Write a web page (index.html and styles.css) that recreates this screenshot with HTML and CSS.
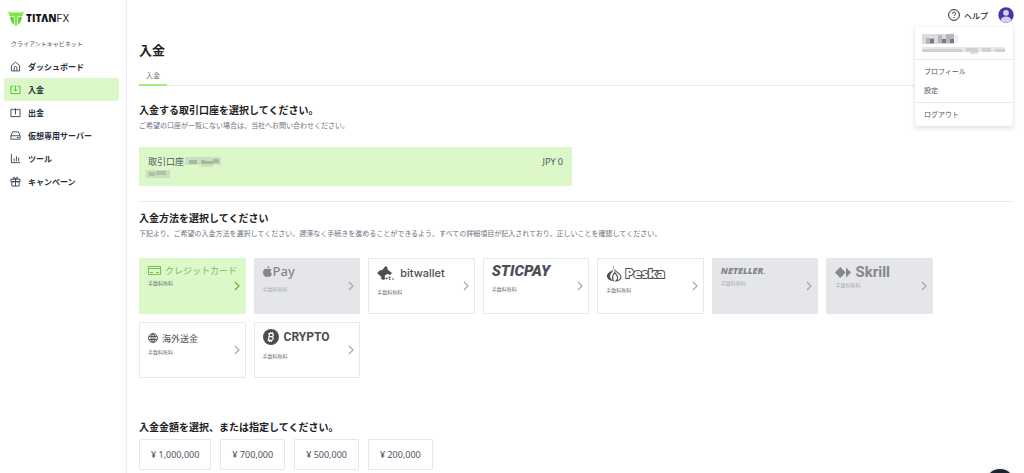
FILE: index.html
```html
<!DOCTYPE html>
<html lang="ja">
<head>
<meta charset="utf-8">
<meta name="viewport" content="width=device-width, initial-scale=1">
<title>入金 | Titan FX</title>
<link rel="stylesheet" href="styles.css">
</head>
<body>
<svg class="defs" aria-hidden="true">
  <symbol id="chevron" viewBox="0 0 6 10"><path d="M1 1l4 4-4 4" fill="none" stroke="currentColor" stroke-width="1.1"/></symbol>
</svg>
<div class="app">
  <aside class="sidebar">
    <a class="logo" href="#" aria-label="TITAN FX">
      <svg width="16" height="15" viewBox="0 0 16 15"><path d="M0 .5l3 1h10l3-1-1.600 4.500H10l-.6 1v8L8 15l-1.400-1V6L6 5H1.600z" fill="#7be84a"/><path d="M2 5.700h3.300l.7 1v6.700C3.600 11.500 2.100 9 2 5.700zM14 5.700h-3.300l-.7 1v6.700c2.400-1.900 3.900-4.400 4-7.700z" fill="#5fd62e"/></svg>
      <span class="logo-text"><b>TITΛN</b>FX</span>
    </a>
    <p class="side-title">クライアントキャビネット</p>
    <nav class="nav">
      <a class="nav-item" href="#"><svg viewBox="0 0 12 12"><path d="M1.500 5L6 1.200 10.500 5v5.800h-9zM4.500 10.500V7.500a1.500 1.500 0 0 1 3 0v3"/></svg>ダッシュボード</a>
      <a class="nav-item active" href="#"><svg viewBox="0 0 12 12"><path d="M4 2.500H1v8h10v-8H8M6 1.500v6M4 5.700l2 2 2-2"/></svg>入金</a>
      <a class="nav-item" href="#"><svg viewBox="0 0 12 12"><path d="M4 2.500H1v8h10v-8H8M6 8V2M4 3.800l2-2 2 2"/></svg>出金</a>
      <a class="nav-item" href="#"><svg viewBox="0 0 12 12"><path d="M1 6.300L2.800 2h6.400L11 6.300V10H1zM1 6.300h10M7.500 8.200h2"/></svg>仮想専用サーバー</a>
      <a class="nav-item" href="#"><svg viewBox="0 0 12 12"><path d="M1.500 1v9.500H11M4.500 6v3M7 3.500V9M9.500 5v4"/></svg>ツール</a>
      <a class="nav-item" href="#"><svg viewBox="0 0 12 12"><path d="M1 3.500h10v2.700H1zM2 6.200h8V11H2zM6 3.500V11M6 3.500C4.500 3.500 3 3 3.500 1.800 4.300.6 6 1.800 6 3.500zM6 3.500c1.500 0 3-.5 2.500-1.700C7.700.6 6 1.800 6 3.500z"/></svg>キャンペーン</a>
    </nav>
  </aside>

  <div class="page">
    <header class="topbar">
      <a class="help" href="#"><svg width="12" height="12" viewBox="0 0 12 12" fill="none" stroke="currentColor" stroke-width="1"><circle cx="6" cy="6" r="5.400"/><path d="M4.400 4.700c0-2 3.200-2 3.200 0C7.600 5.900 6 5.800 6 7.100M6 8v1.100"/></svg>ヘルプ</a>
      <button class="avatar" type="button" aria-label="アカウント">
        <svg width="16" height="16" viewBox="0 0 16 16"><circle cx="8" cy="8" r="7.700" fill="#4338a5"/><circle cx="8" cy="5.800" r="2.900" fill="#d5d1ef"/><path d="M2.600 13.200c1-5 9.800-5 10.800 0a7.700 7.700 0 0 1-10.800 0z" fill="#d5d1ef"/></svg>
      </button>
      <div class="menu">
        <div class="menu-user">
          <svg class="mosaic" width="36" height="10" viewBox="0 0 36 10"><path fill="#d9dbdf" d="M0 0h32v10H0z"/><path fill="#b4b6bd" d="M4 4h8v6H4zM16 1h4v8h-4zM24 0h8v9h-8z"/><path fill="#777a82" d="M8 5h4v4H8zM20 5h4v4h-4zM28 5h4v4h-4z"/><path fill="#eff0f2" d="M32 1h4v8h-4z"/></svg>
          <svg class="mosaic" width="84" height="8" viewBox="0 0 84 8"><path fill="#e7e8eb" d="M0 1h83v5H0z"/><path fill="#cfd1d6" d="M0 3h40v3H0zM44 2h12v4H44zM60 2h9v4h-9zM73 3h10v3H73z"/><path fill="#dcdee2" d="M48 6h8v2h-8z"/></svg>
        </div>
        <div class="menu-group">
          <a href="#">プロフィール</a>
          <a href="#">設定</a>
        </div>
        <div class="menu-group">
          <a href="#">ログアウト</a>
        </div>
      </div>
    </header>

    <main class="content">
      <h1>入金</h1>
      <nav class="tabs"><a class="tab" href="#">入金</a></nav>

      <section class="accounts">
        <h2>入金する取引口座を選択してください。</h2>
        <p class="desc">ご希望の口座が一覧にない場合は、当社へお問い合わせください。</p>
        <button class="account" type="button">
          <span class="account-info">
            <span class="account-name">取引口座
              <svg width="36" height="11" viewBox="0 0 36 11"><path fill="#c9dfbd" d="M0 1h36v8H0zM16 9h12v2H16z"/><path fill="#a7b9a0" d="M4 4h8v4H4zM16 4h4v4h-4zM20 5h8v3h-8zM28 3h6v4h-6z"/></svg>
            </span>
            <svg class="account-id" width="24" height="8" viewBox="0 0 24 8"><path fill="#c9dfbd" d="M0 0h24v8H0z"/><path fill="#afc2a6" d="M3 2h6v4H3zM10 1h10v4H10z"/></svg>
          </span>
          <span>JPY 0</span>
        </button>
      </section>

      <section class="methods">
        <h2>入金方法を選択してください</h2>
        <p class="desc">下記より、ご希望の入金方法を選択してください。遅滞なく手続きを進めることができるよう、すべての詳細項目が記入されており、正しいことを確認してください。</p>
        <div class="cards">
          <button class="card selected" type="button">
            <span class="card-body short"><span class="brand plain"><svg width="13" height="9" viewBox="0 0 13 9"><path d="M.5.5h12v8H.5zM.5 2.500h12M2 6.500h3M8 6.500h3" fill="none" stroke="currentColor"/></svg>クレジットカード</span><small>手数料無料</small></span>
            <svg class="chev"><use href="#chevron"/></svg>
          </button>
          <button class="card" type="button" disabled>
            <span class="card-body tall"><span class="brand apple"><svg width="9" height="11" viewBox="0 0 9 11" fill="currentColor"><path d="M6.300 0c.1 1.300-.8 2.400-2 2.500C4.200 1.200 5.200.2 6.300 0zM8.600 3.800C7 4.800 7.200 7 9 7.700 8.400 9.600 7.300 11 6.200 10.900c-.7-.1-.9-.4-1.600-.4s-1 .4-1.600.4C1.500 11 0 8.500 0 6.300 0 4 1.400 2.800 2.800 2.800c.8 0 1.300.5 1.900.5.500 0 1.100-.6 2.200-.5.700 0 1.300.4 1.700 1z"/></svg>Pay</span><small>手数料無料</small></span>
            <svg class="chev"><use href="#chevron"/></svg>
          </button>
          <button class="card" type="button">
            <span class="card-body taller"><span class="brand bitwallet"><svg width="17" height="15" viewBox="0 0 17 15" fill="currentColor"><path d="M8.500 0l2 1.500v2L15 7l-2 2-2-1-2.300.7-1.200 1.600 1 2.500L6.500 14 4 12.800 4.500 11 0 7l3.500-3 1.500.3z"/><circle cx="9.800" cy="12.300" r=".9"/><circle cx="12.500" cy="11.500" r="1"/><circle cx="12.800" cy="13.500" r=".7"/><circle cx="16" cy="13" r=".8"/></svg>bitwallet</span><small>手数料無料</small></span>
            <svg class="chev"><use href="#chevron"/></svg>
          </button>
          <button class="card" type="button">
            <span class="card-body tall"><span class="brand sticpay">STICPAY</span><small>手数料無料</small></span>
            <svg class="chev"><use href="#chevron"/></svg>
          </button>
          <button class="card" type="button">
            <span class="card-body taller close"><span class="brand peska"><svg width="17" height="17" viewBox="0 0 17 17" fill="none" stroke="currentColor"><path d="M7.500 0c1 3 .8 4-1.500 5.500C2.500 7.500 0 9.500 1.200 12.500 2 15 5 16 7.500 16c-3-2-4-4-3.200-6.200C5.200 7.500 8 6.500 7.500 0z" fill="currentColor" stroke="none"/><path d="M8.500 4.500c.3 2.500 6 3.500 6.500 7 .3 2.500-2 4.500-5 4.500 2.500-2 2.500-4.500-1.500-8.500-2.500 4-3 6.500-.5 8.500" stroke-width="1.100"/></svg><span class="peska-word">Peska</span></span><small>手数料無料</small></span>
            <svg class="chev"><use href="#chevron"/></svg>
          </button>
          <button class="card" type="button" disabled>
            <span class="card-body short"><span class="brand neteller">NETELLER<i>.</i></span><small>手数料無料</small></span>
            <svg class="chev"><use href="#chevron"/></svg>
          </button>
          <button class="card" type="button" disabled>
            <span class="card-body medium"><span class="brand skrill"><svg width="16" height="11" viewBox="0 0 16 11" fill="currentColor"><path d="M5.300 0l5.200 5.500L5.300 11 0 5.500zM11 .5l5 5-5 5z"/></svg>Skrill</span><small>手数料無料</small></span>
            <svg class="chev"><use href="#chevron"/></svg>
          </button>
          <button class="card" type="button">
            <span class="card-body wire"><span class="brand plain"><svg width="10" height="10" viewBox="0 0 10 10" fill="none" stroke="currentColor" stroke-width=".9"><circle cx="5" cy="5" r="4.500"/><ellipse cx="5" cy="5" rx="2" ry="4.500"/><path d="M1 3.500h8M1 6.500h8M5 .5v9"/></svg>海外送金</span><small>手数料無料</small></span>
            <svg class="chev"><use href="#chevron"/></svg>
          </button>
          <button class="card" type="button">
            <span class="card-body taller"><span class="brand crypto"><svg width="16" height="16" viewBox="0 0 16 16"><circle cx="8" cy="8" r="8" fill="currentColor"/><path d="M6.500 4.300l-1 7M5.300 4.500h3.500c2.200 0 2 3.200-.3 3.200H6.300h2.300c2.500 0 2 3.600-.5 3.600H4.600M7.500 3v1.500M9.300 3v1.700M6.500 11.300V13M8.300 11.300V13" fill="none" stroke="#fff" stroke-width="1.200"/></svg>CRYPTO</span><small>手数料無料</small></span>
            <svg class="chev"><use href="#chevron"/></svg>
          </button>
        </div>
      </section>

      <section class="amount">
        <h2>入金金額を選択、または指定してください。</h2>
        <div class="amounts">
          <button type="button">¥ 1,000,000</button>
          <button type="button">¥ 700,000</button>
          <button type="button">¥ 500,000</button>
          <button type="button">¥ 200,000</button>
        </div>
      </section>
    </main>
  </div>
</div>
<button class="chat" type="button" aria-label="チャット"></button>
</body>
</html>
```
FILE: styles.css
```css
* { box-sizing: border-box; }
html, body { height: 100%; }
body {
  margin: 0;
  overflow: hidden;
  background: #fff;
  color: #4b5563;
  font-family: "Noto Sans", "Noto Sans CJK JP", sans-serif;
  font-size: 8px;
}
a { color: inherit; text-decoration: none; }
button { margin: 0; padding: 0; border: 0; background: none; color: inherit; font: inherit; }
h1, h2, p { margin: 0; }
svg { display: block; flex: none; }
.defs { position: absolute; width: 0; height: 0; }

.app { display: flex; min-height: 100%; }

.sidebar { flex: none; width: 127px; padding: 11px 7px 0 4px; border-right: 1px solid #edeef0; }
.logo { display: flex; align-items: center; gap: 2px; height: 15px; padding-left: 4px; color: #16181d; }
.logo-text { font: 400 10px/15px Inter, sans-serif; }
.logo-text b { font-family: "Open Sans", sans-serif; font-weight: 800; }
.side-title { padding: 12px 0 0 7px; font-size: 6px; line-height: 12px; }
.nav { display: grid; padding-top: 5px; }
.nav-item {
  display: flex;
  align-items: center;
  gap: 7px;
  height: 23px;
  padding-left: 6px;
  border-radius: 2px;
  color: #252c3a;
  font-weight: 600;
  font-size: 8px;
}
.nav-item svg { width: 11px; height: 11px; fill: none; stroke: #374151; stroke-width: 1; }
.nav-item.active { background: #dcf8c9; }
.nav-item.active svg { stroke: #4fbf28; }

.page { flex: 1; min-width: 0; }
.topbar {
  position: relative;
  display: flex;
  align-items: center;
  justify-content: flex-end;
  gap: 10px;
  height: 30px;
  padding-right: 10px;
}
.help { display: flex; align-items: center; gap: 4px; color: #1f2937; font-weight: 500; }
.menu {
  position: absolute;
  top: 27px;
  right: 11px;
  width: 98px;
  background: #fff;
  border-radius: 2px;
  box-shadow: 0 0 1px rgba(0, 0, 0, .15), 0 2px 5px rgba(0, 0, 0, .13);
}
.menu-user { display: grid; gap: 2px; padding: 7px 0 5px 7px; }
.menu-group { padding: 2px 0; border-top: 1px solid #e8e9ec; }
.menu-group a { display: block; padding-left: 9px; font-size: 7px; line-height: 19px; }

.content { padding: 11px 11px 0 12px; }
h1 { color: #222; font-size: 13px; line-height: 18px; font-weight: 600; }
.tabs { display: flex; margin-top: 9px; box-shadow: inset 0 -1px #e9eaed; }
.tab { padding: 0 7px; border-bottom: 2px solid #a5ec7b; color: #6b7280; font-size: 7px; line-height: 16px; }
h2 { color: #222; font-size: 10px; line-height: 16px; font-weight: 600; }
.desc { color: #6b7280; font-size: 7px; line-height: 16px; }

.accounts { padding: 16px 0 15px; border-bottom: 1px solid #e9eaed; }
.account {
  display: flex;
  justify-content: space-between;
  width: 100%;
  max-width: 433px;
  margin-top: 13px;
  padding: 8px 9px;
  border-radius: 1px;
  background: #dcf8c9;
  font-size: 9px;
  line-height: 13px;
}
.account-name { display: flex; align-items: center; gap: 1px; }
.account-id { margin: 2px 0 0 -2px; }

.methods { padding-top: 8px; }
.cards { display: grid; grid-template-columns: repeat(7, minmax(0, 1fr)); gap: 8px; max-width: 794px; margin-top: 16px; }
.card {
  display: flex;
  align-items: center;
  justify-content: space-between;
  height: 56px;
  padding: 5px 5px 5px 8px;
  border: 1px solid #e9eaec;
  border-radius: 1px;
  text-align: left;
}
.card.selected { border-color: #dcf8c9; background: #dcf8c9; }
.card:disabled { border-color: #e5e6ea; background: #e5e6ea; }
.card-body { align-self: flex-start; display: grid; min-width: 0; }
.brand { display: flex; align-items: center; height: 16px; color: #4b4e54; white-space: nowrap; }
.card small { color: #6b7280; font-size: 5px; line-height: 8px; }
.card:disabled .brand { color: #85878c; }
.card:disabled small { color: #a9acb8; }
.selected .brand { color: #78bf50; }
.chev { width: 6px; height: 10px; color: #a2a5aa; }
.selected .chev { color: #5dae38; }

.short { gap: 2px; }
.short .brand { height: 13px; }
.medium { gap: 1px; }
.tall { gap: 6px; }
.tall .brand { height: 15px; }
.taller { gap: 6px; }
.taller .brand { height: 18px; }
.taller.close { gap: 4px; }
.wire .brand { height: 20px; }

.plain { gap: 4px; font-size: 9px; }
.apple { gap: 1px; font: 500 13px/15px "Noto Sans", sans-serif; }
.bitwallet { gap: 6px; font: 500 11px/18px Inter, sans-serif; }
.sticpay { font: italic 900 15px/15px Roboto, sans-serif; }
.peska { gap: 2px; }
.peska-word { color: #fff; font: 800 13px/18px "Open Sans", sans-serif; -webkit-text-stroke: 2px #4b4e54; paint-order: stroke fill; }
.neteller { font: italic 800 9px/11px "Open Sans", sans-serif; }
.neteller i { font-weight: 400; }
.skrill { gap: 4px; font: 700 15px/16px "Liberation Sans Narrow", Roboto, sans-serif; }
.crypto { gap: 5px; font: 700 12px/18px Roboto, sans-serif; }

.amount { padding-top: 41px; }
.amounts { display: flex; gap: 9px; margin-top: 4px; }
.amounts button { height: 31px; padding: 0 11px; border: 1px solid #e5e7eb; border-radius: 1px; font-size: 9px; }

.chat { position: fixed; right: 9px; bottom: -26px; width: 30px; height: 30px; border-radius: 50%; background: #1c2434; box-shadow: 0 0 5px rgba(0, 0, 0, .15); }
```
